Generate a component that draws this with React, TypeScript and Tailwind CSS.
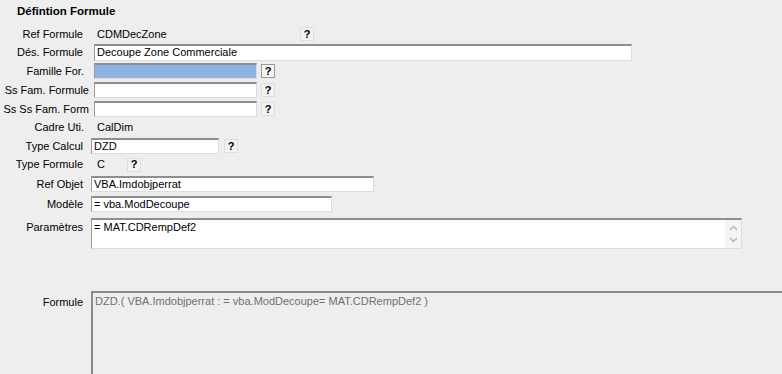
import React from "react";

const font = { fontFamily: '"Liberation Sans", Arial, sans-serif' };

function Label({ text, className = "" }: { text: string; className?: string }) {
  return <div className={"shrink-0 whitespace-nowrap text-right " + className}>{text}</div>;
}

function Field({ w, value = "", blue = false }: { w: string; value?: string; blue?: boolean }) {
  return (
    <div
      className={
        "h-full shrink-0 border-t-2 border-l border-r border-b border-t-[#8e8e8e] border-l-[#9c9c9c] border-r-[#dcdcdc] border-b-[#dcdcdc] pl-[2px] leading-[13px] " +
        w +
        (blue ? " bg-[#8db3e2]" : " bg-white")
      }
    >
      {value}
    </div>
  );
}

function Help({ strong = false }: { strong?: boolean }) {
  return (
    <div
      className={
        "flex h-[14px] w-[14px] shrink-0 items-center justify-center text-[11px] font-bold leading-none " +
        (strong ? "border border-[#9a9a9a] bg-[#f6f6f6]" : "border border-[#dedede] bg-[#f2f2f2]")
      }
    >
      ?
    </div>
  );
}

function Chevron({ up }: { up?: boolean }) {
  return (
    <svg width="9" height="6" viewBox="0 0 9 6" className="block">
      <path
        d={up ? "M1 5 L4.5 1.5 L8 5" : "M1 1 L4.5 4.5 L8 1"}
        fill="none"
        stroke="#b4b4b4"
        strokeWidth="1.4"
      />
    </svg>
  );
}

export default function App() {
  return (
    <div className="h-[374px] w-[782px] overflow-hidden bg-[#eeeeee] text-[11px] text-black" style={font}>
      <div className="flex flex-col">
        {/* titre */}
        <div className="mt-[4px] flex h-[16px] items-center pl-[17px] text-[11.5px] font-bold">Défintion Formule</div>

        {/* Ref Formule */}
        <div className="mt-[7px] flex h-[14px] items-center">
          <Label text="Ref Formule" className="w-[83px]" />
          <div className="ml-[14px] w-[203px]">CDMDecZone</div>
          <Help />
        </div>

        <div className="mt-[3px] flex h-[17px] items-center">
          <Label text="Dés. Formule" className="w-[83px]" />
          <div className="ml-[11px] h-full">
            <Field w="w-[538px]" value="Decoupe Zone Commerciale" />
          </div>
        </div>

        <div className="mt-[2px] flex h-[16px] items-center gap-[4px]">
          <Label text="Famille For." className="mr-[6px] w-[84px]" />
          <Field w="w-[163px]" blue />
          <Help strong />
        </div>

        <div className="mt-[3px] flex h-[16px] items-center gap-[4px]">
          <Label text="Ss Fam. Formule" className="mr-[1px] w-[89px]" />
          <Field w="w-[163px]" />
          <Help />
        </div>

        <div className="mt-[3px] flex h-[16px] items-center gap-[4px]">
          <Label text="Ss Ss Fam. Form" className="mr-[1px] w-[89px]" />
          <Field w="w-[163px]" />
          <Help />
        </div>

        <div className="mt-[3px] flex h-[14px] items-center">
          <Label text="Cadre Uti." className="w-[84px]" />
          <div className="ml-[13px]">CalDim</div>
        </div>

        <div className="mt-[4px] flex h-[16px] items-center">
          <Label text="Type Calcul" className="w-[83px]" />
          <div className="ml-[8px] h-full">
            <Field w="w-[128px]" value="DZD" />
          </div>
          <div className="ml-[5px]">
            <Help />
          </div>
        </div>

        <div className="mt-[4px] flex h-[13px] items-center">
          <Label text="Type Formule" className="w-[83px]" />
          <div className="ml-[14px] w-[30px]">C</div>
          <Help />
        </div>

        <div className="mt-[5px] flex h-[16px] items-center">
          <Label text="Ref Objet" className="w-[83px]" />
          <div className="ml-[8px] h-full">
            <Field w="w-[283px]" value="VBA.Imdobjperrat" />
          </div>
        </div>

        <div className="mt-[4px] flex h-[16px] items-center">
          <Label text="Modèle" className="w-[83px]" />
          <div className="ml-[8px] h-full">
            <Field w="w-[241px]" value="= vba.ModDecoupe" />
          </div>
        </div>

        <div className="mt-[6px] flex h-[31px] items-start">
          <Label text="Paramètres" className="mt-[1px] w-[83px]" />
          <div className="ml-[8px] flex h-full w-[651px] border-t-2 border-l border-r border-b border-t-[#8e8e8e] border-l-[#9c9c9c] border-r-[#dcdcdc] border-b-[#dcdcdc] bg-white">
            <div className="flex-1 pl-[2px] pt-[1px] leading-[13px]">= MAT.CDRempDef2</div>
            <div className="flex w-[16px] flex-col items-center justify-around bg-[#f4f4f4] py-[2px]">
              <Chevron up />
              <Chevron />
            </div>
          </div>
        </div>

        <div className="mt-[42px] flex h-[100px] items-start">
          <Label text="Formule" className="mt-[3px] w-[83px]" />
          <div className="ml-[8px] h-full flex-1 border-t-2 border-l-2 border-t-[#8a8a8a] border-l-[#8a8a8a] pl-[2px] pt-[2px] leading-[13px] text-[#707070]">
            DZD.( VBA.Imdobjperrat : = vba.ModDecoupe= MAT.CDRempDef2 )
          </div>
        </div>
      </div>
    </div>
  );
}
